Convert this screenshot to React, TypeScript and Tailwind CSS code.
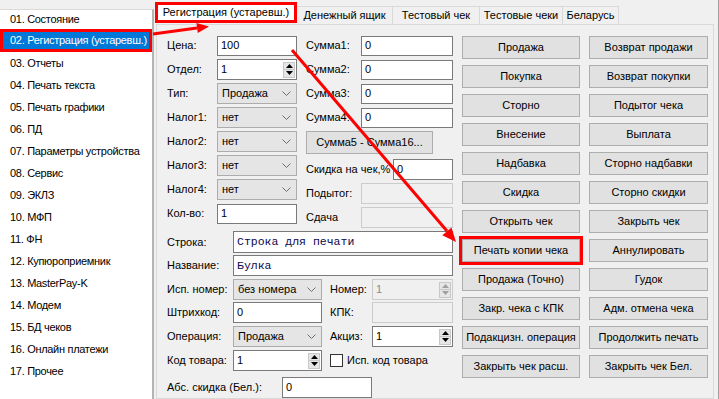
import React from 'react';

const menuItems = [
  '01. Состояние',
  '02. Регистрация (устаревш.)',
  '03. Отчеты',
  '04. Печать текста',
  '05. Печать графики',
  '06. ПД',
  '07. Параметры устройства',
  '08. Сервис',
  '09. ЭКЛЗ',
  '10. МФП',
  '11. ФН',
  '12. Купюроприемник',
  '13. MasterPay-K',
  '14. Модем',
  '15. БД чеков',
  '16. Онлайн платежи',
  '17. Прочее',
];

const tabs = [
  { label: 'Денежный ящик', w: 'w-[96px]' },
  { label: 'Тестовый чек', w: 'w-[87px]' },
  { label: 'Тестовые чеки', w: 'w-[83px]' },
  { label: 'Беларусь', w: 'w-[56px]' },
];

const buttons = [
  'Продажа', 'Возврат продажи',
  'Покупка', 'Возврат покупки',
  'Сторно', 'Подытог чека',
  'Внесение', 'Выплата',
  'Надбавка', 'Сторно надбавки',
  'Скидка', 'Сторно скидки',
  'Открыть чек', 'Закрыть чек',
  'Печать копии чека', 'Аннулировать',
  'Продажа (Точно)', 'Гудок',
  'Закр. чека с КПК', 'Адм. отмена чека',
  'Подакцизн. операция', 'Продолжить печать',
  'Закрыть чек расш.', 'Закрыть чек Бел.',
];

const Chevron = () => (
  <svg width="9" height="5" viewBox="0 0 9 5" className="shrink-0">
    <polyline points="0.5,0.5 4.5,4.5 8.5,0.5" fill="none" stroke="#707070" strokeWidth="1" />
  </svg>
);

const Spinner = ({ disabled }: { disabled?: boolean }) => {
  const c = disabled ? '#a0a0a0' : '#000';
  return (
    <div className="w-[12px] h-[16px] flex flex-col shrink-0 mr-[1px]">
      <div className="flex-1 bg-[#e6e6e6] border border-[#c8c8c8] flex items-center justify-center">
        <svg width="7" height="4" viewBox="0 0 7 4"><polygon points="0,4 3.5,0 7,4" fill={c} /></svg>
      </div>
      <div className="flex-1 bg-[#e6e6e6] border border-t-0 border-[#c8c8c8] flex items-center justify-center">
        <svg width="7" height="4" viewBox="0 0 7 4"><polygon points="0,0 3.5,4 7,0" fill={c} /></svg>
      </div>
    </div>
  );
};

const TextBox = ({ value, w, h = 'h-[21px]', mono }: { value?: string; w: string; h?: string; mono?: boolean }) => (
  <div
    className={`${w} ${h} shrink-0 bg-white border border-[#7a7a7a] pl-[3px] flex items-center overflow-hidden whitespace-nowrap ${
      mono ? "font-['Liberation_Mono',monospace] text-[11.5px] text-[#0a0a50]" : ''
    }`}
  >
    {value}
  </div>
);

const Disabled = ({ w }: { w: string }) => (
  <div className={`${w} h-[21px] shrink-0 bg-[#f0f0f0] border border-[#cccccc]`} />
);

const SpinBox = ({ value, w, disabled }: { value: string; w: string; disabled?: boolean }) => (
  <div
    className={`${w} h-[21px] shrink-0 border flex items-center justify-between pl-[3px] ${
      disabled ? 'bg-[#f0f0f0] border-[#cccccc] text-[#8a8a8a]' : 'bg-white border-[#7a7a7a]'
    }`}
  >
    <span>{value}</span>
    <Spinner disabled={disabled} />
  </div>
);

const Combo = ({ value, w }: { value: string; w: string }) => (
  <div className={`${w} h-[21px] shrink-0 bg-[#e5e5e5] border border-[#acacac] pl-[4px] pr-[5px] flex items-center justify-between`}>
    <span>{value}</span>
    <Chevron />
  </div>
);

const Row = ({ children, className = '' }: { children: React.ReactNode; className?: string }) => (
  <div className={`flex items-center h-[21px] whitespace-nowrap ${className}`}>{children}</div>
);

export default function App() {
  return (
    <div className="relative w-[719px] h-[399px] overflow-hidden bg-[#f0f0f0] text-[11px] leading-none text-black font-['Liberation_Sans',Arial,sans-serif] flex">
      {/* left menu */}
      <div className="w-[154px] shrink-0 pt-[9px]">
        <div className="h-full bg-white border-t border-r-2 border-[#b4b4b4] border-t-[#d9d9d9] text-[11px] tracking-[-0.3px]">
          {menuItems.map((item, i) => (
            <div
              key={item}
              className={
                i === 1
                  ? 'h-[23px] flex items-center pl-[10px] bg-[#0078d7] text-white shadow-[inset_0_0_0_3px_#ff0000] whitespace-nowrap overflow-hidden'
                  : i === 0
                  ? 'h-[19px] flex items-center pl-[10px] whitespace-nowrap'
                  : 'h-[22px] flex items-center pl-[10px] whitespace-nowrap'
              }
            >
              {item}
            </div>
          ))}
        </div>
      </div>

      {/* tab control */}
      <div className="w-[562px] shrink-0 flex flex-col">
        <div className="h-[27px] flex items-end pl-[1px]">
          <div className="w-[142px] h-[21px] mb-[1px] bg-white border-[3px] border-[#ff0000] flex items-center justify-center whitespace-nowrap">
            Регистрация (устаревш.)
          </div>
          {tabs.map((t) => (
            <div
              key={t.label}
              className={`${t.w} h-[18px] border-t border-r border-[#d9d9d9] bg-[#f0f0f0] flex items-center justify-center whitespace-nowrap`}
            >
              {t.label}
            </div>
          ))}
        </div>
        <div className="ml-[2px] w-[558px] flex-1 border border-[#d9d9d9] bg-[#f0f0f0] pt-[10px] pl-[10px] flex">
          {/* form */}
          <div className="w-[286px] shrink-0 flex flex-col">
            <div className="h-[196px] flex">
              <div className="w-[130px] flex flex-col gap-[3px]">
                <Row><span className="w-[50px]">Цена:</span><TextBox value="100" w="w-[80px]" h="h-[20px]" /></Row>
                <Row><span className="w-[50px]">Отдел:</span><SpinBox value="1" w="w-[80px]" /></Row>
                <Row><span className="w-[50px]">Тип:</span><Combo value="Продажа" w="w-[80px]" /></Row>
                <Row><span className="w-[50px]">Налог1:</span><Combo value="нет" w="w-[80px]" /></Row>
                <Row><span className="w-[50px]">Налог2:</span><Combo value="нет" w="w-[80px]" /></Row>
                <Row><span className="w-[50px]">Налог3:</span><Combo value="нет" w="w-[80px]" /></Row>
                <Row><span className="w-[50px]">Налог4:</span><Combo value="нет" w="w-[80px]" /></Row>
                <Row><span className="w-[50px]">Кол-во:</span><TextBox value="1" w="w-[80px]" h="h-[20px]" /></Row>
              </div>
              <div className="ml-[9px] w-[147px] flex flex-col">
                <div className="flex flex-col gap-[3px]">
                  {['Сумма1:', 'Сумма2:', 'Сумма3:', 'Сумма4:'].map((s) => (
                    <Row key={s}><span className="w-[55px]">{s}</span><TextBox value="0" w="w-[92px]" h="h-[20px]" /></Row>
                  ))}
                </div>
                <div className="mt-[3px] w-[127px] h-[23px] bg-[#e1e1e1] border border-[#adadad] flex items-center justify-center">
                  Сумма5 - Сумма16...
                </div>
                <Row className="mt-[5px]"><span className="w-[87px]">Скидка на чек,%</span><TextBox value="0" w="w-[60px]" /></Row>
                <Row className="mt-[3px]"><span className="w-[55px]">Подытог:</span><Disabled w="w-[92px]" /></Row>
                <Row className="mt-[3px]"><span className="w-[55px]">Сдача</span><Disabled w="w-[92px]" /></Row>
              </div>
            </div>

            <div className="flex items-center h-[22px]">
              <span className="w-[66px]">Строка:</span>
              <TextBox value="Строка для печати" w="w-[220px]" h="h-[22px]" mono />
            </div>
            <Row className="mt-[2px]"><span className="w-[66px]">Название:</span><TextBox value="Булка" w="w-[220px]" mono /></Row>
            <Row className="mt-[3px]">
              <span className="w-[66px]">Исп. номер:</span><Combo value="без номера" w="w-[89px]" />
              <span className="ml-[8px] w-[42px]">Номер:</span><SpinBox value="1" w="w-[81px]" disabled />
            </Row>
            <Row className="mt-[2px]">
              <span className="w-[66px]">Штрихкод:</span><TextBox value="0" w="w-[89px]" />
              <span className="ml-[8px] w-[42px]">КПК:</span><Disabled w="w-[81px]" />
            </Row>
            <Row className="mt-[3px]">
              <span className="w-[66px]">Операция:</span><Combo value="Продажа" w="w-[89px]" />
              <span className="ml-[8px] w-[42px]">Акциз:</span><SpinBox value="1" w="w-[81px]" />
            </Row>
            <Row className="mt-[3px]">
              <span className="w-[66px]">Код товара:</span><SpinBox value="1" w="w-[89px]" />
              <span className="ml-[8px] w-[13px] h-[13px] bg-white border border-[#333333]" />
              <span className="ml-[4px]">Исп. код товара</span>
            </Row>
            <Row className="mt-[6px]"><span className="w-[115px]">Абс. скидка (Бел.):</span><TextBox value="0" w="w-[90px]" /></Row>
          </div>

          {/* buttons */}
          <div className="ml-[9px] mt-[1px] grid grid-cols-[118px_119px] gap-x-[9px] gap-y-[6px] content-start">
            {buttons.map((b) => (
              <div
                key={b}
                className={`h-[23px] bg-[#e1e1e1] border border-[#adadad] flex items-center justify-center whitespace-nowrap ${
                  b === 'Печать копии чека' ? 'outline-[3px] outline-solid outline-[#ff0000]' : ''
                }`}
              >
                {b}
              </div>
            ))}
          </div>
        </div>
      </div>

      {/* edge of the next window */}
      <div className="flex-1 ml-[2px] border-l border-[#a0a0a0] bg-white" />

      {/* annotation arrows */}
      <svg className="absolute inset-0 pointer-events-none" width="719" height="399" viewBox="0 0 719 399">
        <line x1="153" y1="34" x2="197" y2="28" stroke="#ff0000" strokeWidth="3" />
        <polygon points="209,26.5 197.8,33.1 196.4,23.1" fill="#ff0000" />
        <line x1="292" y1="50" x2="447" y2="231" stroke="#ff0000" strokeWidth="3" />
        <polygon points="456,242 451.5,227.5 442.3,235.2" fill="#ff0000" />
      </svg>
    </div>
  );
}
